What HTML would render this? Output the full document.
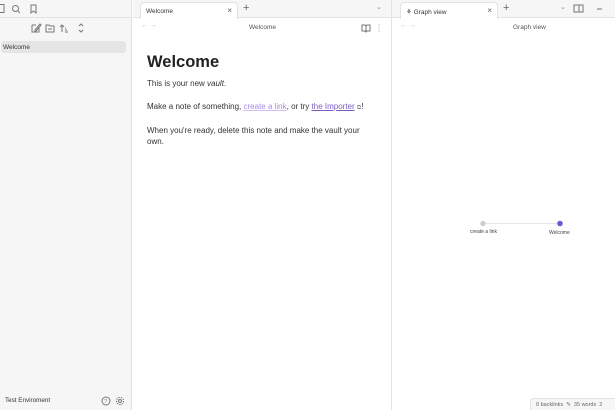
<!DOCTYPE html>
<html><head><style>
*{margin:0;padding:0;box-sizing:border-box}
body{width:615px;height:410px;overflow:hidden;font-family:"Liberation Sans",sans-serif;background:#fff;position:relative;color:#222}
.abs{position:absolute}
.sb{left:0;top:0;width:132px;height:410px;background:#f6f6f6;border-right:1px solid #e0e0e0}
.tabbar{top:0;height:18px;background:#f6f6f6;border-bottom:1px solid #e3e3e3}
.tab{top:2px;height:17px;background:#fff;border:1px solid #e3e3e3;border-bottom:none;border-radius:4px 4px 0 0;font-size:6.5px;color:#333;padding:5px 0 0 5px}
.t{font-size:6.5px;color:#555}
.ic{stroke:#777;fill:none;stroke-width:1}
p{font-size:8px;color:#333;line-height:11px}
</style></head><body>
<div class="abs sb"></div>
<svg class="abs" style="left:0;top:3px" width="45" height="12"><rect x="-3" y="1.5" width="7" height="8" class="ic"/><circle cx="15.5" cy="5.5" r="3" class="ic"/><line x1="17.7" y1="7.7" x2="20" y2="10" class="ic"/><path d="M31 2h5v8l-2.5-2-2.5 2z" class="ic"/></svg>
<div class="abs" style="left:0;top:17px;width:132px;border-top:1px solid #e3e3e3"></div>
<svg class="abs" style="left:30px;top:22px" width="60" height="12"><path d="M2 3h4M2 3v7h7V6M5 8l5-6 1 1-5 6H5z" class="ic"/><path d="M16 3h3l1 1h4v6h-8z M18 7h4" class="ic"/><path d="M32 10V3M30 5l2-2 2 2M35 10h3M35 8h2M35 6h1" class="ic"/><path d="M49 4l2-2 2 2M49 8l2 2 2-2" class="ic"/></svg>
<div class="abs" style="left:1px;top:41px;width:125px;height:12px;background:#e5e5e5;border-radius:3px;font-size:6.5px;padding:3px 0 0 2px;color:#333">Welcome</div>
<div class="abs" style="left:5px;top:397px;font-size:6.3px;color:#333">Test Enviroment</div>
<svg class="abs" style="left:100px;top:395px" width="28" height="12"><circle cx="6" cy="6" r="4" class="ic"/><text x="4.3" y="8" font-size="5" fill="#777" font-family="Liberation Sans">?</text><circle cx="20" cy="6" r="1.5" class="ic"/><circle cx="20" cy="6" r="3.6" class="ic" stroke-dasharray="1.5 1"/></svg>

<div class="abs tabbar" style="left:133px;width:258px"></div>
<div class="abs tab" style="left:140px;width:98px">Welcome<span style="position:absolute;right:5px;top:3px;font-size:8px;color:#555">×</span></div>
<div class="abs" style="left:243px;top:2px;font-size:11px;color:#666">+</div>
<div class="abs" style="left:376px;top:3px;font-size:7px;color:#888">⌄</div>
<div class="abs" style="left:141px;top:22px;font-size:7px;color:#bbb">← →</div>
<div class="abs t" style="left:249px;top:24px">Welcome</div>
<svg class="abs" style="left:360px;top:22px" width="25" height="12"><path d="M2 3h3l1 1 1-1h3v6H7l-1 1-1-1H2zM6 4v6" class="ic"/><circle cx="19" cy="3" r=".5" fill="#777"/><circle cx="19" cy="6" r=".5" fill="#777"/><circle cx="19" cy="9" r=".5" fill="#777"/></svg>
<div class="abs" style="left:147px;top:53px;font-size:16.5px;font-weight:bold;color:#222">Welcome</div>
<div class="abs" style="left:147px;top:78px"><p>This is your new <i>vault</i>.</p></div>
<div class="abs" style="left:147px;top:101px;white-space:nowrap"><p>Make a note of something, <span style="color:#a88be0;text-decoration:underline;text-decoration-color:#d0c0f0">create a link</span>, or try <span style="color:#7a5cc0;text-decoration:underline">the Importer</span> <span style="font-size:6px;color:#888">⧉</span>!</p></div>
<div class="abs" style="left:147px;top:125px;width:222px"><p>When you're ready, delete this note and make the vault your own.</p></div>

<div class="abs" style="left:391px;top:0;height:410px;border-left:1px solid #e3e3e3"></div>
<div class="abs tabbar" style="left:392px;width:223px"></div>
<div class="abs tab" style="left:400px;width:98px">&#x2698; Graph view<span style="position:absolute;right:5px;top:3px;font-size:8px;color:#555">×</span></div>
<div class="abs" style="left:503px;top:2px;font-size:11px;color:#666">+</div>
<div class="abs" style="left:560px;top:3px;font-size:7px;color:#888">⌄</div>
<svg class="abs" style="left:572px;top:4px" width="43" height="12"><rect x="2" y="1" width="9" height="7" class="ic"/><line x1="7" y1="1" x2="7" y2="8" class="ic"/><line x1="25" y1="5" x2="30" y2="5" class="ic"/></svg>
<div class="abs" style="left:400px;top:22px;font-size:7px;color:#ccc">← →</div>
<div class="abs t" style="left:513px;top:24px">Graph view</div>
<svg class="abs" style="left:392px;top:200px" width="223" height="50"><line x1="91" y1="23.5" x2="168" y2="23.5" stroke="#e6e6e6" stroke-width="1"/><circle cx="91" cy="23.5" r="2.6" fill="#ccc"/><circle cx="168" cy="23.5" r="2.8" fill="#6b5ad6"/><text x="78" y="33" font-size="5" fill="#444" font-family="Liberation Sans">create a link</text><text x="157" y="34" font-size="5" fill="#444" font-family="Liberation Sans">Welcome</text></svg>
<div class="abs" style="left:530px;top:398px;width:85px;height:12px;background:#f6f6f6;border:1px solid #e3e3e3;border-right:none;border-bottom:none;border-radius:4px 0 0 0;font-size:5.5px;color:#666;padding:3px 0 0 5px;white-space:nowrap">0 backlinks &nbsp;✎&nbsp; 35 words &nbsp;2</div>
</body></html>
